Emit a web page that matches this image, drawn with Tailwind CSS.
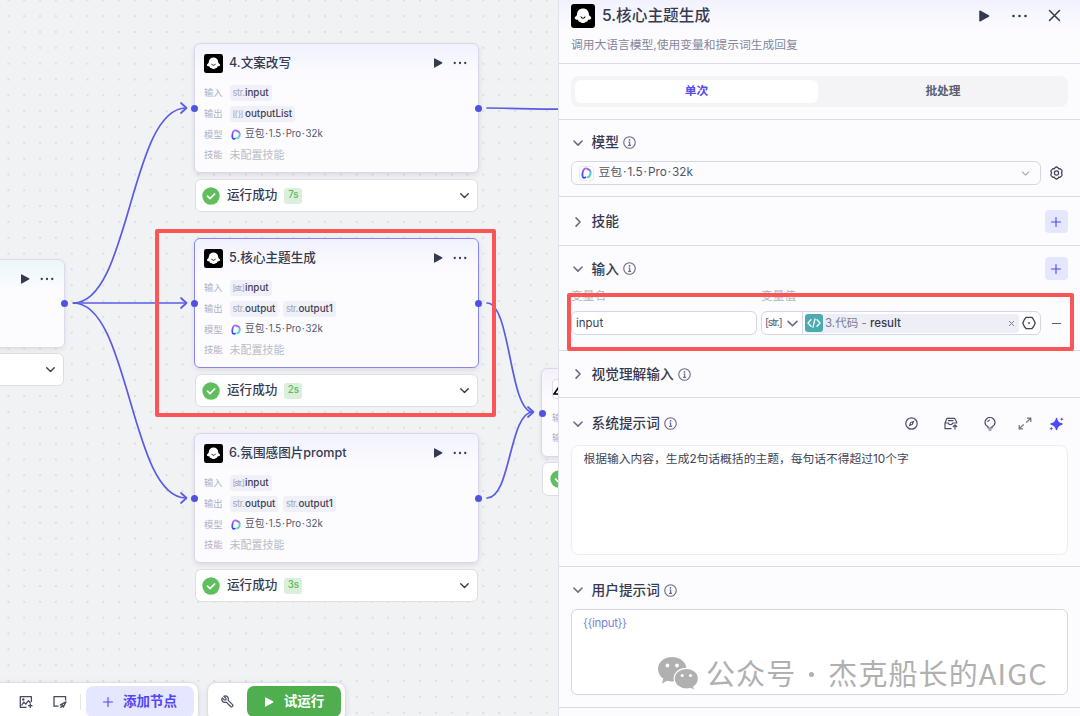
<!DOCTYPE html>
<html lang="zh-CN">

<head>
    <meta charset="UTF-8">
    <meta name="viewport" content="width=device-width, initial-scale=1.0">
    <title>工作流编辑</title>
    <script src="https://cdn.jsdelivr.net/npm/@tailwindcss/browser@4"></script>
</head>

<body class="w-[1080px] h-[716px] overflow-hidden bg-[#f0f2f4] text-[#353a50] font-['Inter','Noto_Sans_CJK_SC',sans-serif]">

    <!-- Icons -->
    <svg class="absolute w-0 h-0">
        <defs>
            <linearGradient id="doubaoLeft" x1="0" y1="0" x2="0" y2="1">
                <stop offset="0" stop-color="#b06bf2" />
                <stop offset="0.55" stop-color="#5a4dfb" />
                <stop offset="1" stop-color="#3347ff" />
            </linearGradient>
            <linearGradient id="doubaoRight" x1="0" y1="0" x2="0" y2="1">
                <stop offset="0" stop-color="#a55ef0" />
                <stop offset="0.45" stop-color="#5ccfd8" />
                <stop offset="1" stop-color="#54e0b4" />
            </linearGradient>
        </defs>
        <symbol id="llm" viewBox="0 0 24 24">
            <rect width="24" height="24" rx="3" fill="#000" />
            <path d="M12 4.500c3.300 0 5.700 2.200 5.900 5.400 0 1.100.4 1.700 1 2.200l1 .9c.6.700.4 1.700-.4 2.200-.8.400-1.700.5-2.500.5-.3 1.700-1 2-2 2-.9.900-1.700 1.300-3 1.300s-2.100-.4-3-1.300c-1 0-1.700-.3-2-2-.8 0-1.700-.1-2.500-.5-.8-.5-1-1.500-.4-2.200l1-.9c.6-.5 1-1.100 1-2.200.2-3.200 2.600-5.400 5.900-5.400z" fill="#fff" />
            <path d="M10 12.900c.4 1 1.100 1.400 2 1.400s1.600-.4 2-1.400" fill="none" stroke="#000" stroke-width="1.100" stroke-linecap="round" />
        </symbol>
        <symbol id="play" viewBox="0 0 12 12">
            <path d="M1.200 1.200c0-.7.5-1 1.100-.7l8.500 4.700c.6.400.6 1.100 0 1.500l-8.500 4.700c-.6.400-1.100.1-1.100-.6z" fill="currentColor" />
        </symbol>
        <symbol id="dots" viewBox="0 0 16 4">
            <circle cx="2" cy="2" r="1.300" fill="currentColor" />
            <circle cx="8" cy="2" r="1.300" fill="currentColor" />
            <circle cx="14" cy="2" r="1.300" fill="currentColor" />
        </symbol>
        <symbol id="down" viewBox="0 0 12 12">
            <path d="M1.900 4 6 8.100 10.100 4" fill="none" stroke="currentColor" stroke-width="1.500" stroke-linecap="round" stroke-linejoin="round" />
        </symbol>
        <symbol id="right" viewBox="0 0 12 12">
            <path d="M4 1.900 8.100 6 4 10.100" fill="none" stroke="currentColor" stroke-width="1.500" stroke-linecap="round" stroke-linejoin="round" />
        </symbol>
        <symbol id="info" viewBox="0 0 14 14">
            <circle cx="7" cy="7" r="6.200" fill="none" stroke="currentColor" stroke-width="1.200" />
            <circle cx="7" cy="4.200" r="0.900" fill="currentColor" />
            <path d="M5.900 6.400h1.300v3.600M5.500 10.100h3.200" fill="none" stroke="currentColor" stroke-width="1.200" />
        </symbol>
        <symbol id="plus" viewBox="0 0 12 12">
            <path d="M6 1.500v9M1.500 6h9" fill="none" stroke="currentColor" stroke-width="1.100" stroke-linecap="round" />
        </symbol>
        <symbol id="check" viewBox="0 0 18 18">
            <circle cx="9" cy="9" r="8.700" fill="#60bf5d" />
            <path d="m5.500 9.200 2.500 2.400 4.600-4.600" fill="none" stroke="#fff" stroke-width="1.700" stroke-linecap="round" stroke-linejoin="round" />
        </symbol>
        <symbol id="doubao" viewBox="0 0 10 11">
            <path d="M5.500 2C7.600 2 9 3.700 8.700 6c-.2 1.900-1.400 3.200-3.300 3.500" fill="none" stroke="url(#doubaoRight)" stroke-width="2" />
            <path d="M6.300 2C4.400.4 2.200 1.600 1.600 4.400 1 7.300 1.200 9.800 2.500 9.900c.9.100 1.500-.3 2-.7" fill="none" stroke="url(#doubaoLeft)" stroke-width="1.700" />
        </symbol>
    </svg>

    <div class="relative flex justify-end w-full h-full">

        <!-- Canvas -->
        <svg class="absolute inset-0" width="1080" height="716">
            <defs>
                <pattern id="grid" x="0.500" y="-7.600" width="15.830" height="15.830" patternUnits="userSpaceOnUse">
                    <circle cx="7.900" cy="7.900" r="0.750" fill="#bfc1c7" />
                </pattern>
            </defs>
            <rect width="1080" height="716" fill="url(#grid)" />
            <g fill="none" stroke="#5a5ce6" stroke-width="1.700" stroke-linecap="round" stroke-linejoin="round">
                <path d="M73.500 303C130 303 130 108 186 108" />
                <path d="M73.500 303H186" />
                <path d="M73.500 303C130 303 130 498 186 498" />
                <path d="M487 108C511 108 530 109.200 562 109.200" />
                <path d="M487 303C511 303 509 412 533 412" />
                <path d="M487 498C511 498 509 412 533 412" />
                <path d="m181 103 5.500 5-5.500 5" />
                <path d="m181 298 5.500 5-5.500 5" />
                <path d="m181 493 5.500 5-5.500 5" />
                <path d="m528 407 5.500 5-5.500 5" />
            </g>
        </svg>

        <!-- Previous node -->
        <div class="absolute left-[-200px] top-[259px] w-[265px] h-[89px] rounded-[6px] border border-[#d9dbe8] bg-linear-to-b from-[#ebf7fa] to-[#fcfcff] to-35% shadow-[0_2px_5px_rgba(30,30,60,0.08)] flex justify-end gap-[10px] pt-[14px] pr-[10px]">
            <svg class="w-[10px] h-[10px]"><use href="#play" /></svg>
            <svg class="w-[14px] h-1 mt-[3px]"><use href="#dots" /></svg>
        </div>
        <div class="absolute left-[-200px] top-[353px] w-[264px] h-[33px] rounded-[6px] border border-[#dcdde8] bg-white flex items-center justify-end pr-[7px]">
            <svg class="w-[11px] h-[11px]"><use href="#down" /></svg>
        </div>
        <div class="absolute left-[61px] top-[300px] w-[7px] h-[7px] rounded-full bg-[#5053df]"></div>

        <!-- Model nodes -->
        <div id="nodes"></div>

        <!-- Next node -->
        <div class="absolute left-[541px] top-[368px] w-[285px] h-[89px] rounded-[6px] border border-[#d9d6e6] bg-linear-to-b from-[#f6effc] to-[#fcfcff] to-35% shadow-[0_2px_5px_rgba(30,30,60,0.08)] pt-[10px] pl-[10px] text-[9.300px] text-[#afb1c6]">
            <div class="w-5 h-5 rounded-[4px] border border-[#dcdde8] bg-white flex items-center justify-center">
                <svg class="w-[18px] h-[18px]" viewBox="0 0 18 18"><path d="M8 4 1 14H16M8 4l4 7" fill="none" stroke="#000" stroke-width="1.700" /></svg>
            </div>
            <div class="h-[20px] leading-[20px] mt-[9px]">输入</div>
            <div class="h-[20px] leading-[20px]">输出</div>
        </div>
        <div class="absolute left-[542px] top-[462px] w-[283px] h-[34px] rounded-[6px] border border-[#dcdde8] bg-white flex items-center pl-[7px]">
            <svg class="w-[18px] h-[18px]"><use href="#check" /></svg>
        </div>
        <div class="absolute left-[539px] top-[410px] w-[7px] h-[7px] rounded-full bg-[#5053df]"></div>

        <!-- Toolbars -->
        <div class="absolute left-[-12px] top-[682px] h-[40px] w-[211px] rounded-[9px] border border-[#dcdde6] bg-white shadow-[0_2px_6px_rgba(30,30,60,0.1)] flex items-start pt-[3px] pr-1 justify-end">
            <svg class="w-[14px] h-[14px] mt-[9px]" viewBox="0 0 14 14" fill="none" stroke="#454a5c" stroke-width="1.300" stroke-linejoin="round"><path d="M12.400 7V1.700H1.300v10.600h6.200" /><path d="m2.500 10.500 2.300-3.400 2 2 2.700-3.400 2 2.300M9 10.700h4.500M11.300 8.500v4.500" /><circle cx="4.300" cy="4.500" r=".6" /></svg>
            <svg class="w-[14px] h-[14px] mt-[9px] ml-[20px]" viewBox="0 0 14 14" fill="none" stroke="#454a5c" stroke-width="1.300" stroke-linejoin="round"><path d="M12.600 5.500V1.700H1v9.500h4.500" /><path d="M13 6.800 8.300 9.400l1.500.9.500 1.900zM8.300 9.400l-1.500.8M9.800 10.300l-2.300 2.500" /></svg>
            <div class="w-px h-4 bg-[#e6e7ee] mt-2 ml-[13px]"></div>
            <button class="ml-[5px] w-[108px] h-[31px] rounded-[7px] bg-[#e5e6ff] text-[#5147f5] text-[13.500px] font-bold flex items-center justify-center gap-[9px] pr-px">
                <svg class="w-[12px] h-[12px]"><use href="#plus" /></svg>
                <span>添加节点</span>
            </button>
        </div>
        <div class="absolute left-[207px] top-[682px] h-[40px] w-[139px] rounded-[9px] border border-[#dcdde6] bg-white shadow-[0_2px_6px_rgba(30,30,60,0.1)] flex items-start pt-[3px] pl-[13px]">
            <svg class="w-[13px] h-[13px] mt-[9px]" viewBox="0 0 13 13" fill="none" stroke="#454a5c" stroke-width="1.200" stroke-linejoin="round"><path d="M2.800 1.300 5 3.400 4.900 4.900 3.400 5 1.200 2.900C.3 4.700 1.100 6.600 2.700 7.200c1 .4 1.900.3 2.600 0l4.300 4.300c1.300 1.100 3-.6 1.900-1.900L7.200 5.300c.3-.8.300-1.700-.1-2.600C6.400 1.200 4.500.5 2.800 1.300z" /></svg>
            <button class="ml-[13px] w-[94px] h-[31px] rounded-[7px] bg-[#4fae4e] text-white text-[13.500px] font-bold flex items-center justify-center gap-[10px]">
                <svg class="w-[10px] h-[10px]"><use href="#play" /></svg>
                <span>试运行</span>
            </button>
        </div>

        <!-- Highlight around node 5 -->
        <div class="absolute left-[155px] top-[229px] w-[341px] h-[188px] border-4 border-[#fc5555] rounded-[2px]"></div>

        <!-- Side panel -->
        <aside class="relative w-[522px] h-[716px] bg-[#fcfcff] border-l border-[#dfe0ea] flex flex-col">

            <header class="h-[64px] shrink-0 border-b border-[#dadbe8] bg-linear-to-b from-[#f2f2fe] to-[#fcfcff] to-50% pl-[12px] pr-[19px] pt-[3px]">
                <div class="flex items-center h-[25px]">
                    <svg class="w-6 h-6"><use href="#llm" /></svg>
                    <h2 class="ml-[7px] text-[15.700px] font-medium">5.核心主题生成</h2>
                    <svg class="ml-auto w-3 h-3"><use href="#play" /></svg>
                    <svg class="ml-[21px] w-[17px] h-1"><use href="#dots" /></svg>
                    <svg class="ml-[20px] w-[13px] h-[13px]" viewBox="0 0 13 13"><path d="m1.500 1.500 10 10M11.500 1.500l-10 10" stroke="currentColor" stroke-width="1.500" stroke-linecap="round" /></svg>
                </div>
                <p class="mt-[8px] leading-[18px] text-[11.750px] text-[#84879b]">调用大语言模型,使用变量和提示词生成回复</p>
            </header>

            <div class="h-[56px] shrink-0 border-b border-[#dadbe8] pl-[12px] pr-[12px] pt-[12px]">
                <div class="h-[31px] rounded-[8px] bg-[#f4f4f7] p-[4px] flex text-[11.750px] font-bold">
                    <div class="w-[243px] rounded-[6px] bg-white text-[#544deb] flex items-center justify-center">单次</div>
                    <div class="flex-1 pl-[4px] flex items-center justify-center text-[#5c5f70]">批处理</div>
                </div>
            </div>

            <section class="h-[77px] shrink-0 border-b border-[#dadbe8] pl-[13px] pr-[12px]">
                <div class="h-[41px] pt-[4px] flex items-center">
                    <svg class="w-3 h-3 text-[#676b85]"><use href="#down" /></svg>
                    <h3 class="ml-[7.500px] text-[13.700px] font-medium">模型</h3>
                    <svg class="ml-[4.500px] w-[13px] h-[13px] text-[#676b85]"><use href="#info" /></svg>
                </div>
                <div class="flex items-center -ml-px">
                    <div class="w-[470px] h-[24px] rounded-[6px] border border-[#d5d6e5] flex items-center pl-[7px] pr-[10px] text-[11.750px] text-[#505468]">
                        <span class="w-[15px] h-[15px] rounded-[3px] border border-[#e8e8f2] bg-white flex items-center justify-center"><svg class="w-[11px] h-[12px]"><use href="#doubao" /></svg></span>
                        <span class="ml-[4.500px]">豆包<i class="mx-[1px] not-italic">·</i>1.5<i class="mx-[1px] not-italic">·</i>Pro<i class="mx-[1px] not-italic">·</i>32k</span>
                        <svg class="ml-auto w-[9px] h-[9px] text-[#a9acbd]"><use href="#down" /></svg>
                    </div>
                    <svg class="ml-[8px] w-[15px] h-[14px]" viewBox="0 0 14 14" fill="none" stroke="#3d4257" stroke-width="1.200" stroke-linejoin="round"><path d="M5.600 1.600 7 .9l1.400.7.6 1.200 1.600-.1 1.900 1.700v1.500L11.900 7l.6 1.100v1.500l-1.900 1.700-1.600-.1-.6 1.200-1.400.7-1.400-.7-.6-1.200-1.600.1-1.900-1.700V8.100L2.100 7l-.6-1.100V4.400l1.900-1.700 1.600.1z" /><circle cx="7" cy="7" r="2.100" /></svg>
                </div>
            </section>

            <section class="h-[49px] shrink-0 border-b border-[#dadbe8] pl-[13px] pr-[12px] flex items-center pt-[1px]">
                <svg class="w-3 h-3 text-[#676b85]"><use href="#right" /></svg>
                <h3 class="ml-[7.500px] text-[13.700px] font-medium">技能</h3>
                <button class="ml-auto w-[23.500px] h-[23.500px] rounded-[4px] bg-[#e5e6ff] text-[#5147f5] flex items-center justify-center"><svg class="w-[12px] h-[12px]"><use href="#plus" /></svg></button>
            </section>

            <section class="h-[105px] shrink-0 border-b border-[#dadbe8] pl-[13px] pr-[12px]">
                <div class="h-[44px] pt-[1px] flex items-center">
                    <svg class="w-3 h-3 text-[#676b85]"><use href="#down" /></svg>
                    <h3 class="ml-[7.500px] pt-px text-[13.700px] font-medium">输入</h3>
                    <svg class="ml-[4.500px] w-[13px] h-[13px] text-[#676b85]"><use href="#info" /></svg>
                    <button class="ml-auto w-[23.500px] h-[23.500px] rounded-[4px] bg-[#e5e6ff] text-[#5147f5] flex items-center justify-center"><svg class="w-[12px] h-[12px]"><use href="#plus" /></svg></button>
                </div>
                <div class="flex h-[21px] pt-[1px] -ml-px leading-[10px] text-[11.700px] text-[#b3b3bb]">
                    <div class="w-[190px]">变量名</div>
                    <div>变量值</div>
                </div>
                <div class="flex items-center -ml-px">
                    <div class="w-[186px] h-[24px] rounded-[6px] border border-[#d5d6e5] bg-white pl-[4px] pt-[1px] flex items-center text-[11.500px] text-[#3d4156]">input</div>
                    <div class="ml-[4px] w-[280px] h-[24px] rounded-[6px] border border-[#d5d6e5] bg-white flex items-center pl-[3px] text-[11.500px]">
                        <span class="w-[17px] shrink-0 text-[10.800px] tracking-[-1.200px] text-[#5b5f76] whitespace-nowrap">[str.]</span>
                        <svg class="ml-[4px] w-[13px] h-[13px] text-[#676b85] shrink-0"><use href="#down" /></svg>
                        <span class="ml-[3px] w-px h-full bg-[#dcdde8]"></span>
                        <div class="ml-[2px] w-[214px] h-[19px] rounded-[4px] bg-[#eeeef7] flex items-center pr-[4px]">
                            <svg class="w-[18px] h-[18px]" viewBox="0 0 18 18"><rect width="18" height="18" rx="3" fill="#4bacb0" /><path d="m6 5.800-3 3.200 3 3.200M12 5.800 15 9l-3 3.200M10 4.800 8 13.200" fill="none" stroke="#fff" stroke-width="1.300" stroke-linecap="round" stroke-linejoin="round" /></svg>
                            <span class="ml-[2px] pt-[1px] text-[#787c92]">3.代码 - <span class="font-medium text-[#353a50] text-[11.500px]">result</span></span>
                            <svg class="ml-auto w-[7px] h-[7px]" viewBox="0 0 7 7"><path d="m1 1 5 5M6 1 1 6" stroke="#7c8095" stroke-width="1" /></svg>
                        </div>
                        <svg class="ml-[3px] w-[14px] h-[14px] shrink-0" viewBox="0 0 14 14" fill="none" stroke="#3f4459" stroke-width="1.300" stroke-linejoin="round"><path d="M4.200 1.300h5.600Q12 3.500 13.200 7 12 10.500 9.800 12.700H4.200Q2 10.500.8 7 2 3.500 4.200 1.300z" /><circle cx="7" cy="7" r=".9" fill="#3f4459" stroke="none" /></svg>
                    </div>
                    <span class="ml-[11px] w-[9px] h-px bg-[#5c6076]"></span>
                </div>
            </section>

            <section class="h-[47px] shrink-0 border-b border-[#dadbe8] pl-[13px] flex items-center">
                <svg class="w-3 h-3 text-[#676b85]"><use href="#right" /></svg>
                <h3 class="ml-[7.500px] text-[13.700px] font-medium">视觉理解输入</h3>
                <svg class="ml-[4.500px] w-[13px] h-[13px] text-[#676b85]"><use href="#info" /></svg>
            </section>

            <section class="h-[169px] shrink-0 border-b border-[#dadbe8] pl-[12px] pr-[12px]">
                <div class="h-[47px] pt-[4px] flex items-center pl-px pr-[4px] text-[#4a4e63]">
                    <svg class="w-3 h-3 text-[#676b85]"><use href="#down" /></svg>
                    <h3 class="ml-[7.500px] text-[13.700px] font-medium text-[#353a50]">系统提示词</h3>
                    <svg class="ml-[4.500px] w-[13px] h-[13px] text-[#676b85]"><use href="#info" /></svg>
                    <svg class="ml-auto w-[13px] h-[13px]" viewBox="0 0 13 13"><circle cx="6.500" cy="6.500" r="5.700" fill="none" stroke="currentColor" stroke-width="1.200" /><path d="M9.500 3.500 7.700 7.700 3.500 9.500l1.800-4.200z" fill="currentColor" /><circle cx="6.500" cy="6.500" r=".7" fill="#fcfcff" /></svg>
                    <svg class="ml-[26px] w-[14px] h-[13px]" viewBox="0 0 14 13" fill="none" stroke="currentColor" stroke-width="1.200" stroke-linejoin="round"><path d="M7.500 11.700H1V6l2-4.700h7.500L12.700 5v1.500M1 6h3.200c.3 1.200 1 1.700 2.300 1.700 1.200 0 1.900-.5 2.200-1.700h4M4 3.700h5.500M11 12.500V8.300M8.900 10 11 7.900 13.100 10" /></svg>
                    <svg class="ml-[26px] w-[12px] h-[14px]" viewBox="0 0 12 14" fill="none" stroke="currentColor" stroke-width="1.200" stroke-linejoin="round"><path d="M4 11V9.500C2 8.700 1 7.300 1 5.500a5 5 0 0 1 10 0c0 1.800-1 3.200-3 4V11zM4.500 13h3M3.600 5A2.500 2.500 0 0 1 6 3" /></svg>
                    <svg class="ml-[22px] w-[14px] h-[13px] text-[#6c7083]" viewBox="0 0 14 13" fill="none" stroke="currentColor" stroke-width="1.200"><path d="M9 1.200h3.800V5M12.600 1.400 8.300 5.500M5 11.800H1.200V8M1.400 11.600l4.300-4.100" /></svg>
                    <svg class="ml-[17px] w-[15px] h-[14px]" viewBox="0 0 15 14" fill="#5147f5"><path d="M7.500 1.500c.5 3 1.700 4.600 5.500 5.500-3.800.9-5 2.500-5.500 5.500C7 9.500 5.800 7.900 2 7c3.800-.9 5-2.500 5.500-5.500z" stroke="#5147f5" stroke-width="1.400" stroke-linejoin="round" /><path d="M12.800.2 13.300 1.600l1.400.6-1.400.5-.5 1.400-.5-1.400-1.400-.5 1.400-.6zM2.300 9.700l.5 1.400 1.400.6-1.400.5-.5 1.500-.5-1.500-1.400-.5 1.400-.6z" /></svg>
                </div>
                <div class="h-[110px] rounded-[8px] border border-[#ececf2] bg-white px-[11.500px] pt-[3.500px] leading-[18px] text-[11.780px] text-[#3f4353]">根据输入内容，生成2句话概括的主题，每句话不得超过10个字</div>
            </section>

            <section class="h-[141px] shrink-0 border-b border-[#dadbe8] pl-[12px] pr-[12px]">
                <div class="h-[42px] pt-[4px] pl-px flex items-center">
                    <svg class="w-3 h-3 text-[#676b85]"><use href="#down" /></svg>
                    <h3 class="ml-[7.500px] text-[13.700px] font-medium">用户提示词</h3>
                    <svg class="ml-[4.500px] w-[13px] h-[13px] text-[#676b85]"><use href="#info" /></svg>
                </div>
                <div class="h-[86px] rounded-[6px] border border-[#d5d6e5] bg-white px-[11px] pt-[4px] leading-[18px] text-[11.500px] tracking-[-0.350px] text-[#7b83d8]">{{input}}</div>
            </section>
        </aside>

        <!-- Highlight around the input variable -->
        <div class="absolute left-[567px] top-[293px] w-[507px] h-[58px] border-4 border-[#fc5555] rounded-[2px]"></div>

        <!-- Watermark -->
        <div class="absolute left-[657px] top-[653px] h-[40px] flex items-center text-[#b0b0b0] whitespace-nowrap text-[29px]">
            <svg class="w-[42px] h-[36px]" viewBox="0 0 42 36">
                <path d="M15 2C7 2 1 7.300 1 14c0 4 2 7.300 5.300 9.500L5 28.500l5.200-2.800c1.600.5 3.200.7 4.800.7C23 26.400 29.500 21 29.500 14S23 2 15 2z" fill="#b0b0b0" />
                <path d="M29.500 13.300c-7 0-12.300 4.600-12.300 10.300S22.500 34 29.500 34c1.400 0 2.700-.2 4-.5l4.500 2.300-1.200-4c2.900-1.800 4.600-4.800 4.600-8.200 0-5.700-5-10.300-11.900-10.300z" fill="#b0b0b0" stroke="#fff" stroke-width="1.200" />
                <g fill="#fff"><circle cx="10.500" cy="10.500" r="1.900" /><circle cx="20" cy="10.500" r="1.900" /><circle cx="25.200" cy="20.500" r="1.600" /><circle cx="33.500" cy="20.500" r="1.600" /></g>
            </svg>
            <span class="ml-[7px] tracking-[1.100px] font-['Noto_Sans_CJK_SC',sans-serif]">公众号</span>
            <span class="ml-[13px] mt-[3px] w-[5px] h-[5px] rounded-full bg-[#b0b0b0]"></span>
            <span class="ml-[14px] tracking-[1.100px] font-['Noto_Sans_CJK_SC',sans-serif]">杰克船长的AIGC</span>
        </div>
    </div>

    <script>
        const nodes = [
            { title: "4.文案改写", top: 43, time: "7s", inputs: [["str.", "input"]], outputs: [["[{ }]", "outputList"]] },
            { title: "5.核心主题生成", top: 238, time: "2s", active: true, inputs: [["[str.]", "input"]], outputs: [["str.", "output"], ["str.", "output1"]] },
            { title: "6.氛围感图片prompt", top: 433, time: "3s", inputs: [["[str.]", "input"]], outputs: [["str.", "output"], ["str.", "output1"]] }
        ];

        // Variable tags such as "str. output"
        function tags(list) {
            return list.map(([type, name]) => `
                <span class="h-4 rounded-[3px] bg-[#f0f0f8] px-[3px] flex items-center mr-[4px] ml-[0.500px]">
                    <span class="w-[12px] whitespace-nowrap ${type.startsWith("[") ? "text-[8.500px] tracking-[-1.250px]" : "text-[9.300px] tracking-[-0.400px]"} text-[#a3a6bd]">${type}</span>
                    <span class="ml-[0.500px] text-[9.800px] font-medium text-[#3c4056]">${name}</span>
                </span>`).join("");
        }

        document.getElementById("nodes").innerHTML = nodes.map((node) => `
            <div class="absolute left-[194px] w-[285px]" style="top: ${node.top}px">
                <div class="h-[130px] rounded-[6px] border ${node.active ? "border-[#8886f4]" : "border-[#d6d8e8]"} bg-linear-to-b from-[#f2f2fe] to-[#fcfcff] to-28% shadow-[0_2px_5px_rgba(30,30,60,0.1)] px-[9px] pt-[9px]">
                    <div class="flex items-center h-[20px]">
                        <svg class="w-[19px] h-[19px]"><use href="#llm" /></svg>
                        <h3 class="ml-[6px] pt-[1px] text-[12.600px] font-medium">${node.title}</h3>
                        <svg class="ml-auto w-[10px] h-[10px]"><use href="#play" /></svg>
                        <svg class="ml-[10px] mr-[2px] w-[14px] h-1"><use href="#dots" /></svg>
                    </div>
                    <div class="mt-[10px] grid grid-cols-[25px_1fr] auto-rows-[20.600px] items-center text-[9.300px] text-[#afb1c6]">
                        <span>输入</span><div class="flex">${tags(node.inputs)}</div>
                        <span>输出</span><div class="flex">${tags(node.outputs)}</div>
                        <span>模型</span><div class="flex items-center text-[9.700px] text-[#505468]"><svg class="ml-[2px] mr-[4px] w-[10px] h-[11px]"><use href="#doubao" /></svg><span>豆包<i class="mx-[0.800px] not-italic">·</i>1.5<i class="mx-[0.800px] not-italic">·</i>Pro<i class="mx-[0.800px] not-italic">·</i>32k</span></div>
                        <span>技能</span><div class="ml-[0.500px] text-[11px] text-[#bbbcc4]">未配置技能</div>
                    </div>
                </div>
                <div class="mt-[6px] mx-px h-[33px] rounded-[6px] border border-[#dcdde8] bg-white flex items-center pl-[6px] pr-[7px]">
                    <svg class="w-[18px] h-[18px]"><use href="#check" /></svg>
                    <span class="ml-[7px] text-[12.600px] font-medium">运行成功</span>
                    <span class="ml-[7px] h-4 w-[18px] rounded-[3px] bg-[#daf0dc] text-[#5dba5a] text-[9.700px] font-medium flex items-center justify-center">${node.time}</span>
                    <svg class="ml-auto w-[11px] h-[11px]"><use href="#down" /></svg>
                </div>
                <div class="absolute left-[-3px] top-[62px] w-[7px] h-[7px] rounded-full bg-[#5053df]"></div>
                <div class="absolute right-[-3px] top-[62px] w-[7px] h-[7px] rounded-full bg-[#5053df]"></div>
            </div>`).join("");
    </script>

</body>

</html>
